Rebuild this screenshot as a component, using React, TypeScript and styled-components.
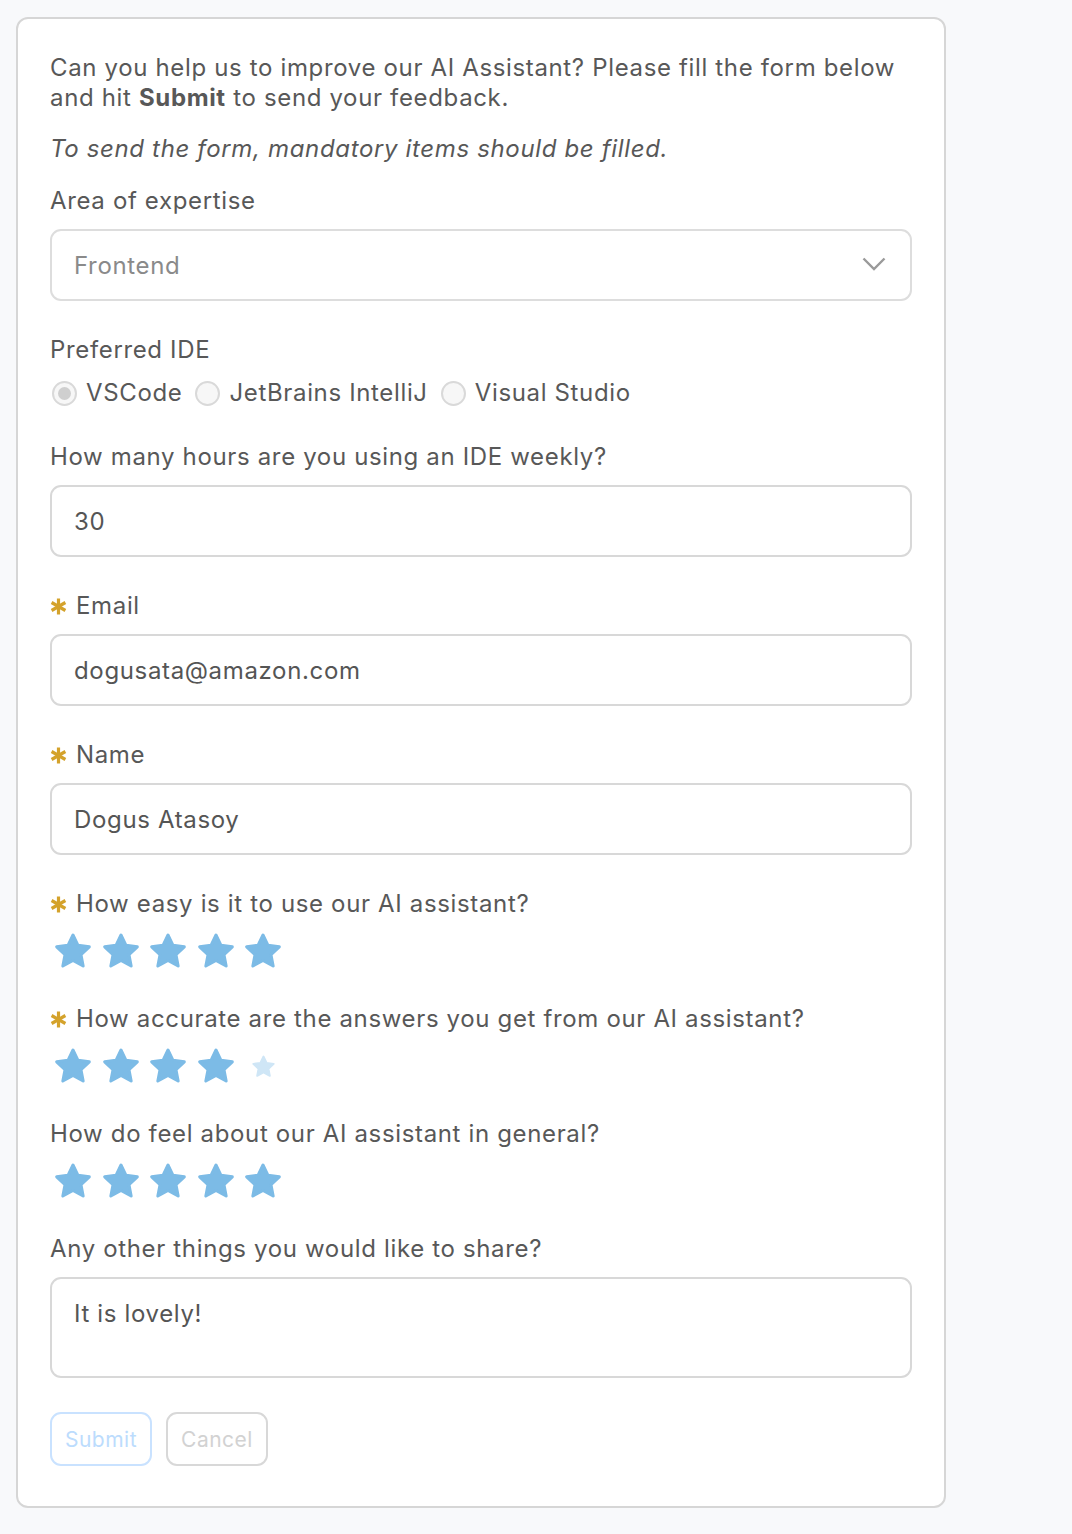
import React from 'react';
import styled, { createGlobalStyle } from 'styled-components';

const GlobalStyle = createGlobalStyle`
  body {
    margin: 0;
    background-color: #f8f9fb;
    font-family: Inter, "Noto Sans", "Liberation Sans", sans-serif;
    letter-spacing: 0.65px;
    color: #585858;
  }
`;

const Page = styled.div`
  padding: 17px 0 27px 16px;
`;

const Card = styled.form`
  box-sizing: border-box;
  width: 930px;
  background-color: #fff;
  border: 2px solid #d6d6d6;
  border-radius: 12px;
  padding: 34px 32px 40px;
  display: flex;
  flex-direction: column;
`;

const Intro = styled.p<{ $italic?: boolean }>`
  margin: 0 0 ${(p) => (p.$italic ? '22px' : '21px')};
  font-size: 24px;
  line-height: 30px;
  font-style: ${(p) => (p.$italic ? 'italic' : 'normal')};
  b {
    font-weight: 700;
  }
`;

const Field = styled.div`
  display: flex;
  flex-direction: column;
  margin-bottom: 34px;
`;

const Label = styled.label`
  display: flex;
  align-items: center;
  height: 30px;
  font-size: 24px;
  line-height: 30px;
  margin-bottom: 13px;
`;

const AsteriskIcon = styled.svg`
  flex: none;
  margin-right: 9px;
`;

const SelectWrap = styled.div`
  position: relative;
`;

const Select = styled.select`
  box-sizing: border-box;
  width: 100%;
  height: 72px;
  appearance: none;
  background: #fff;
  border: 2px solid #dddddd;
  border-radius: 11px;
  padding: 0 22px;
  font-family: inherit;
  font-size: 24px;
  letter-spacing: 0.65px;
  color: #8a8a8a;
`;

const Chevron = styled.svg`
  position: absolute;
  right: 26px;
  top: 28px;
  pointer-events: none;
`;

const TextInput = styled.input`
  box-sizing: border-box;
  width: 100%;
  height: 72px;
  border: 2px solid #d8d8d8;
  border-radius: 11px;
  padding: 0 22px;
  font-family: inherit;
  font-size: 24px;
  letter-spacing: 0.65px;
  color: #555;
  background: #fff;
`;

const TextArea = styled.textarea`
  box-sizing: border-box;
  width: 100%;
  height: 101px;
  border: 2px solid #d8d8d8;
  border-radius: 11px;
  padding: 20px 22px;
  font-family: inherit;
  font-size: 24px;
  line-height: 30px;
  letter-spacing: 0.65px;
  color: #555;
  background: #fff;
  resize: none;
`;

const RadioRow = styled.div`
  display: flex;
  align-items: center;
  height: 30px;
  gap: 11px;
`;

const RadioOption = styled.label`
  display: flex;
  align-items: center;
  gap: 9px;
  font-size: 24px;
  line-height: 30px;
`;

const RadioDot = styled.span<{ $checked?: boolean }>`
  box-sizing: border-box;
  width: 25px;
  height: 25px;
  border-radius: 50%;
  border: 2px solid #d9d9d9;
  background: #f7f7f7;
  display: flex;
  align-items: center;
  justify-content: center;
  margin-left: 2px;
  &::after {
    content: '';
    width: 13px;
    height: 13px;
    border-radius: 50%;
    background: ${(p) => (p.$checked ? '#cfcfcf' : 'transparent')};
  }
`;

const Stars = styled.div`
  display: flex;
  align-items: center;
  height: 38px;
  padding-left: 3px;
  gap: 7.5px;
`;

const StarSlot = styled.span`
  width: 40px;
  height: 38px;
  display: flex;
  align-items: center;
  justify-content: center;
`;

const Buttons = styled.div`
  display: flex;
  gap: 14px;
`;

const Button = styled.button<{ $primary?: boolean }>`
  box-sizing: border-box;
  height: 54px;
  width: 102px;
  border-radius: 11px;
  background: #fff;
  border: 2px solid ${(p) => (p.$primary ? '#c9e2ff' : '#d8d8d8')};
  color: ${(p) => (p.$primary ? '#bcdcfd' : '#d2d2d2')};
  font-family: inherit;
  font-size: 21px;
  letter-spacing: 0.5px;
  padding: 0;
`;

const Star = ({ size, color }: { size: number; color: string }) => (
  <svg width={size} height={size} viewBox="0 0 24 24">
    <polygon
      points="12 2.4 15 8.6 21.8 9.5 16.8 14.2 18.1 21 12 17.7 5.9 21 7.2 14.2 2.2 9.5 9 8.6"
      fill={color}
      stroke={color}
      strokeWidth="1.8"
      strokeLinejoin="round"
    />
  </svg>
);

const Rating = ({ value }: { value: number }) => (
  <Stars>
    {[1, 2, 3, 4, 5].map((i) => (
      <StarSlot key={i}>
        {i <= value ? <Star size={40} color="#7cbbe6" /> : <Star size={25} color="#cfe6f6" />}
      </StarSlot>
    ))}
  </Stars>
);

const Required = () => (
  <AsteriskIcon width="17" height="17" viewBox="0 0 17 17">
    <g stroke="#d4a22b" strokeWidth="3.2">
      <line x1="8.5" y1="0.5" x2="8.5" y2="16.5" />
      <line x1="1.6" y1="4.5" x2="15.4" y2="12.5" />
      <line x1="1.6" y1="12.5" x2="15.4" y2="4.5" />
    </g>
  </AsteriskIcon>
);

const App = () => {
  return (
    <Page>
      <GlobalStyle />
      <Card onSubmit={(e) => e.preventDefault()}>
        <Intro>
          Can you help us to improve our AI Assistant? Please fill the form below and hit <b>Submit</b> to send your
          feedback.
        </Intro>
        <Intro $italic>To send the form, mandatory items should be filled.</Intro>

        <Field>
          <Label>Area of expertise</Label>
          <SelectWrap>
            <Select defaultValue="frontend">
              <option value="frontend">Frontend</option>
              <option value="backend">Backend</option>
            </Select>
            <Chevron width="24" height="14" viewBox="0 0 24 14">
              <polyline points="1.5 1.5 12 12 22.5 1.5" fill="none" stroke="#9a9a9a" strokeWidth="2.4" />
            </Chevron>
          </SelectWrap>
        </Field>

        <Field>
          <Label>Preferred IDE</Label>
          <RadioRow>
            <RadioOption>
              <RadioDot $checked />
              VSCode
            </RadioOption>
            <RadioOption>
              <RadioDot />
              JetBrains IntelliJ
            </RadioOption>
            <RadioOption>
              <RadioDot />
              Visual Studio
            </RadioOption>
          </RadioRow>
        </Field>

        <Field>
          <Label>How many hours are you using an IDE weekly?</Label>
          <TextInput defaultValue="30" />
        </Field>

        <Field>
          <Label>
            <Required />
            Email
          </Label>
          <TextInput defaultValue="dogusata@amazon.com" />
        </Field>

        <Field>
          <Label>
            <Required />
            Name
          </Label>
          <TextInput defaultValue="Dogus Atasoy" />
        </Field>

        <Field>
          <Label>
            <Required />
            How easy is it to use our AI assistant?
          </Label>
          <Rating value={5} />
        </Field>

        <Field>
          <Label>
            <Required />
            How accurate are the answers you get from our AI assistant?
          </Label>
          <Rating value={4} />
        </Field>

        <Field>
          <Label>How do feel about our AI assistant in general?</Label>
          <Rating value={5} />
        </Field>

        <Field>
          <Label>Any other things you would like to share?</Label>
          <TextArea defaultValue="It is lovely!" />
        </Field>

        <Buttons>
          <Button $primary type="submit">
            Submit
          </Button>
          <Button type="button">Cancel</Button>
        </Buttons>
      </Card>
    </Page>
  );
};

export default App;
